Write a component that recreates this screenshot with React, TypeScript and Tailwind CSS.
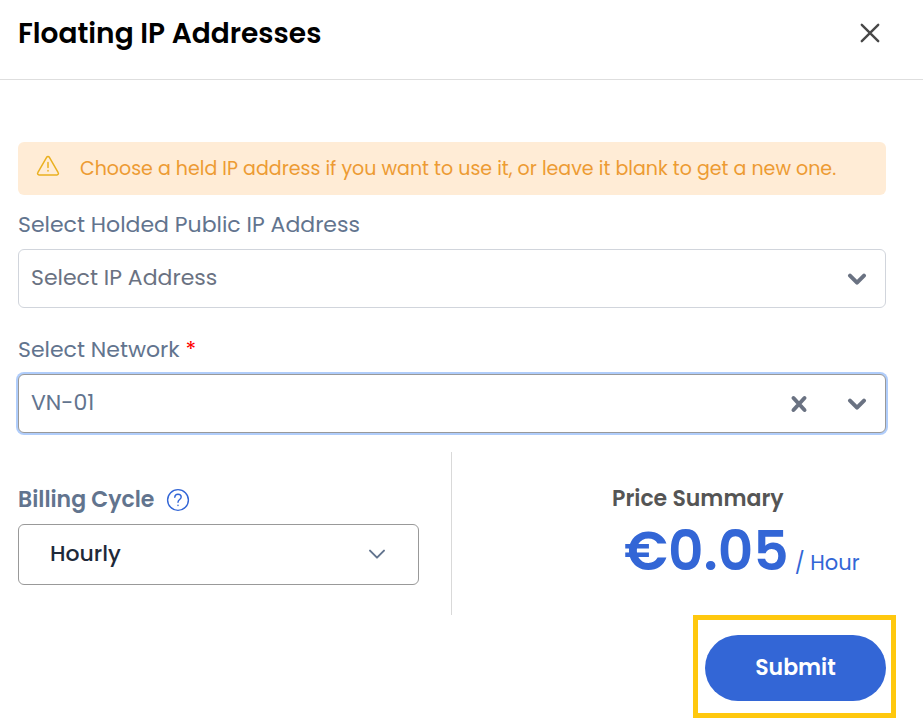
import { useState } from "react";

function Chevron({ className, weight }: { className: string; weight: number }) {
  return (
    <svg viewBox="0 0 20 12" className={className} fill="none" stroke="currentColor" strokeWidth={weight} strokeLinecap="round" strokeLinejoin="round" aria-hidden="true">
      <path d="M3 2.6 10 9.6l7-7" />
    </svg>
  );
}

function WarningIcon() {
  return (
    <svg viewBox="0 0 24 22" className="mb-1.5 h-[22px] w-6 shrink-0 text-[#eab020]" fill="none" stroke="currentColor" strokeWidth="1.5" strokeLinecap="round" strokeLinejoin="round" aria-hidden="true">
      <path d="M10.6 2.4a1.6 1.6 0 0 1 2.8 0l8.8 15.2a1.5 1.5 0 0 1-1.3 2.3H3.1a1.5 1.5 0 0 1-1.3-2.3z" />
      <path d="M12 7.5v5M12 15.6v.3" />
    </svg>
  );
}

export default function App() {
  const [address, setAddress] = useState("");
  const [network, setNetwork] = useState("VN-01");
  const [cycle, setCycle] = useState("Hourly");

  return (
    <main className="bg-white font-['Poppins','Inter',sans-serif] text-[22px] text-slate-500">
      <header className="flex h-20 items-start justify-between border-b border-[#dedede] pt-3 pr-[43px] pl-[18px]">
        <h1 className="text-[28px] leading-[44px] font-semibold text-black">Floating IP Addresses</h1>
        <button type="button" aria-label="Close" className="flex h-[42px] items-center text-[#484848]">
          <svg viewBox="0 0 20 20" className="size-5" fill="none" stroke="currentColor" strokeWidth="2.4" strokeLinecap="round" aria-hidden="true">
            <path d="m1.8 1.8 16.4 16.4M18.2 1.8 1.8 18.2" />
          </svg>
        </button>
      </header>

      <form className="pt-[62px]" onSubmit={(e) => e.preventDefault()}>
        <div className="pr-[37px] pl-[18px]">
          <div role="alert" className="flex h-[53px] items-center gap-5 rounded-md bg-[#ffecd6] pl-[18px] text-[19px] text-[#ed9b33]">
            <WarningIcon />
            <p className="leading-8">Choose a held IP address if you want to use it, or leave it blank to get a new one.</p>
          </div>

          <label htmlFor="address" className="mt-3 block leading-9">Select Holded Public IP Address</label>
          <div className="relative mt-1.5 mb-6">
            <select id="address" value={address} onChange={(e) => setAddress(e.target.value)} className="h-[59px] w-full appearance-none rounded-md border border-gray-300 bg-white pr-14 pb-0.5 pl-3 text-gray-500 outline-none">
              <option value="">Select IP Address</option>
            </select>
            <Chevron weight={4} className="pointer-events-none absolute top-6 right-[19px] h-3 w-5 text-gray-500" />
          </div>

          <label htmlFor="network" className="block leading-9">
            Select Network <span className="text-[#f00]">*</span>
          </label>
          <div className="relative mt-1.5">
            <select id="network" value={network} onChange={(e) => setNetwork(e.target.value)} className="h-[59px] w-full appearance-none rounded-md border border-[#999] bg-white pr-28 pb-0.5 pl-3 ring-2 ring-[#b0cdfb] outline-none">
              <option value="" />
              <option>VN-01</option>
            </select>
            <button type="button" aria-label="Clear network" onClick={() => setNetwork("")} className="absolute top-[21px] right-[78px] text-gray-500">
              <svg viewBox="0 0 18 18" className="block h-[18px] w-[18px]" fill="none" stroke="currentColor" strokeWidth="4" strokeLinecap="round" aria-hidden="true">
                <path d="M3.5 3 14.5 15M14.5 3 3.5 15" />
              </svg>
            </button>
            <Chevron weight={4} className="pointer-events-none absolute top-6 right-[19px] h-3 w-5 text-gray-500" />
          </div>

          <div className="mt-[19px] grid h-[163px] grid-cols-2">
            <div className="border-r border-[#d9d9d9] pt-[30px] pr-8">
              <div className="flex h-9 items-center gap-3">
                <label htmlFor="cycle" className="leading-9 font-semibold">Billing Cycle</label>
                <button type="button" aria-label="About billing cycles" className="text-[#3366d6]">
                  <svg viewBox="0 0 24 24" className="size-6" fill="none" stroke="currentColor" strokeWidth="1.4" strokeLinecap="round" strokeLinejoin="round" aria-hidden="true">
                    <circle cx="12" cy="12" r="10.4" />
                    <path d="M8.8 9.2c.1-1.8 1.4-2.9 3.2-2.9s3.2 1.1 3.2 2.8c0 2.3-3.2 2.6-3.2 5.1M12 17.2v.3" />
                  </svg>
                </button>
              </div>
              <div className="relative mt-1.5">
                <select id="cycle" value={cycle} onChange={(e) => setCycle(e.target.value)} className="h-[61px] w-full appearance-none rounded-md border border-[#999] bg-white pb-0.5 pl-[31px] font-medium text-gray-800 outline-none">
                  <option>Hourly</option>
                  <option>Monthly</option>
                </select>
                <Chevron weight={2} className="pointer-events-none absolute top-6 right-8 h-3 w-5 text-slate-500" />
              </div>
            </div>
            <div className="pt-[30px] pl-40">
              <h2 className="leading-[34px] font-semibold whitespace-nowrap text-[#555]">Price Summary</h2>
              <p className="flex items-baseline gap-1.5 pl-3 whitespace-nowrap text-[#3366d6]">
                <strong className="text-[55px] leading-[70px] font-semibold">€0.05</strong>
                <span className="text-[21px]">/ Hour</span>
              </p>
            </div>
          </div>
        </div>

        <div className="flex justify-end pr-[27px]">
          <div className="border-[5px] border-[#ffc80e] pt-[15px] pr-[5px] pb-3 pl-[7px]">
            <button type="submit" className="h-[66px] w-[181px] rounded-full bg-[#3366d6] pb-0.5 font-semibold text-white">Submit</button>
          </div>
        </div>
      </form>
    </main>
  );
}
